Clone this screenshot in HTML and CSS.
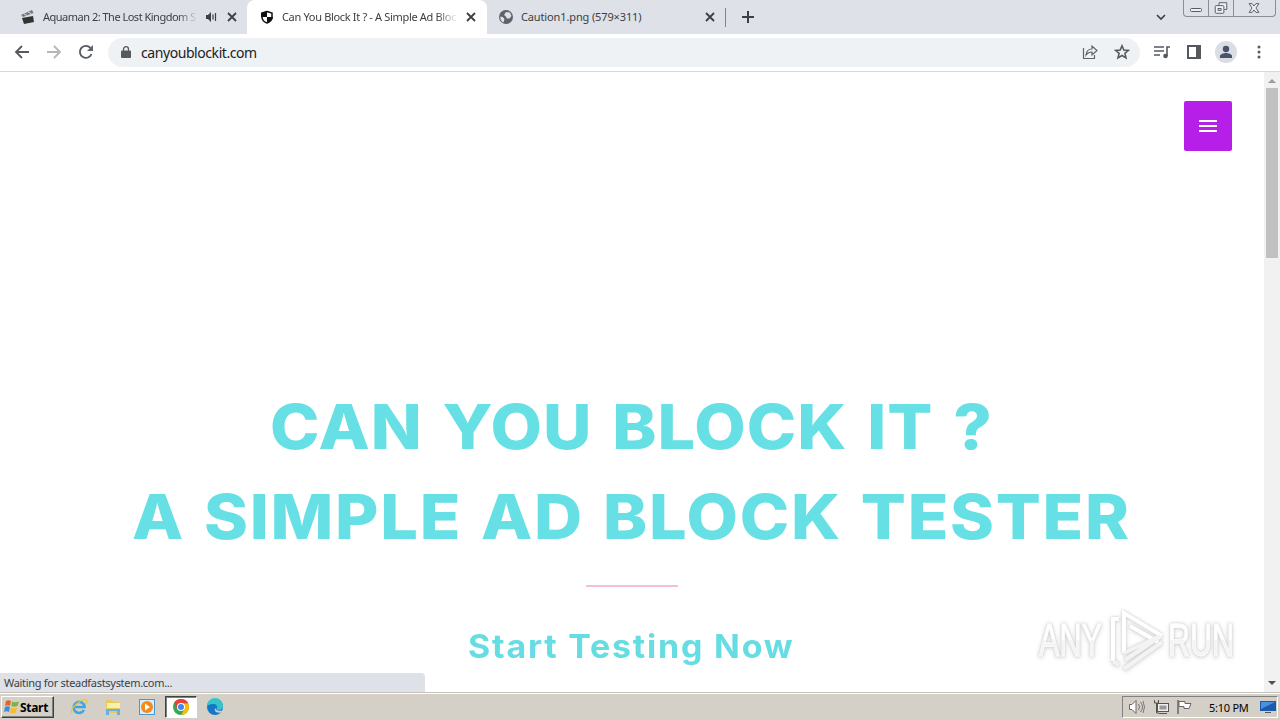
FILE: index.html
```html
<!DOCTYPE html>
<html lang="en">
<head>
  <meta charset="UTF-8">
  <title>Can You Block It ? - A Simple Ad Block Tester</title>
  <link rel="stylesheet" href="styles.css">
</head>
<body>

  <div class="tabs">
    <div class="tab tab-first">
      <svg class="favicon" width="16" height="16" viewBox="0 0 16 16"><path d="M1 6 12 1l1.500 3L3 8z" fill="#777"/><path d="m2 9 11-2 1 6-10 2z" fill="#333"/><path d="m4 5 3 1.500M8 3l3 1.500" stroke="#ddd"/></svg>
      <span class="tab-title title-movie">Aquaman 2: The Lost Kingdom S</span>
      <svg class="sound" width="12" height="12" viewBox="0 0 12 12"><path d="M1 4h2l3-3v10L3 8H1z" fill="#3c4043"/><path d="M8 3.500v5M10.500 2v8" stroke="#3c4043" stroke-width="1.200"/></svg>
      <svg class="close" width="10" height="10" viewBox="0 0 10 10"><path d="m1 1 8 8m0-8-8 8"/></svg>
    </div>
    <div class="tab tab-active">
      <svg class="favicon" width="16" height="16" viewBox="0 0 16 16"><path d="M8 2.500 13 4v4c0 3-2 5-5 6-3-1-5-3-5-6V4z" fill="#fff" stroke="#111" stroke-width="1.500"/><path d="M8 2v6H2V4zM8 8h6c0 3-3 5-6 6z" fill="#111"/></svg>
      <span class="tab-title title-block">Can You Block It ? - A Simple Ad Bloc</span>
      <svg class="close" width="10" height="10" viewBox="0 0 10 10"><path d="m1 1 8 8m0-8-8 8"/></svg>
    </div>
    <div class="tab tab-last">
      <svg class="favicon" width="16" height="16" viewBox="0 0 16 16"><circle cx="8" cy="8" r="7" fill="#5f6368"/><path d="M2.500 7.500c2 0 3 1 4 2.500l-1 3.500C3 12.500 2 10 2.500 7.500zM8 3l4 .5 1.500 3.500-2 2.500H9L7.500 7 6 6z" fill="#dee1e8"/></svg>
      <span class="tab-title title-png">Caution1.png (579×311)</span>
      <svg class="close" width="10" height="10" viewBox="0 0 10 10"><path d="m1 1 8 8m0-8-8 8"/></svg>
    </div>
    <svg class="new-tab" width="12" height="12" viewBox="0 0 12 12"><path d="M6 0v12M0 6h12"/></svg>
    <svg class="tab-search" width="10" height="7" viewBox="0 0 10 7"><path d="m1 1 4 4 4-4"/></svg>
    <div class="window-buttons">
      <svg width="24" height="16" viewBox="0 0 24 16"><rect x="6.500" y="8.500" width="11" height="3" rx="1"/></svg>
      <svg width="25" height="16" viewBox="0 0 25 16"><path d="M10.500 5V2.500h8v7H16"/><rect x="6.500" y="5.500" width="9" height="8" rx="1"/><rect x="9.500" y="8.500" width="3" height="2"/></svg>
      <svg width="41" height="16" viewBox="0 0 41 16"><path d="M15.500 3.500h3l2 2.500 2-2.500h3L22.500 8l3 4.500h-3l-2-2.500-2 2.500h-3l3-4.500z"/></svg>
    </div>
  </div>

  <div class="toolbar">
    <svg class="nav" width="16" height="16" viewBox="0 0 16 16"><path d="M15 8H2m6-6L2 8l6 6"/></svg>
    <svg class="nav nav-off" width="16" height="16" viewBox="0 0 16 16"><path d="M1 8h13M8 2l6 6-6 6"/></svg>
    <svg class="nav" width="16" height="16" viewBox="0 0 16 16"><path d="M13.500 10A6 6 0 1 1 12.300 3.800L14 5.500"/><path d="M15 1v6H9z" fill="#5f6368" stroke="none"/></svg>
    <div class="address">
      <svg width="10" height="13" viewBox="0 0 10 13"><rect y="4.500" width="10" height="7.500" rx="1" fill="#55595e"/><path d="M2.500 5V3.200a2.500 2.500 0 0 1 5 0V5" fill="none" stroke="#55595e" stroke-width="1.300"/></svg>
      <span class="url">canyoublockit.com</span>
      <svg class="share" width="16" height="16" viewBox="0 0 16 16"><path d="M1.500 4v10.500h11V11M4 11c.5-4 2.500-6 6-6V2l5 4.500L10 11V8c-3 0-4.500 1-6 3z"/></svg>
      <svg class="star" width="16" height="16" viewBox="0 0 16 16"><path d="m8 1.800 1.800 4.200 4.600.4-3.500 3 1.100 4.500L8 11.500l-4 2.400 1.100-4.500-3.500-3 4.600-.4z"/></svg>
    </div>
    <svg class="media" width="16" height="14" viewBox="0 0 16 14"><path d="M0 2h10M0 6h10M0 10h6M13 11V2h3" fill="none" stroke="#55595e" stroke-width="1.600"/><circle cx="11.500" cy="11" r="2.300" fill="#55595e"/></svg>
    <svg class="panel" width="14" height="14" viewBox="0 0 14 14"><path d="M0 0h14v14H0zm2 2v10h7V2z" fill="#55595e" fill-rule="evenodd"/></svg>
    <svg class="avatar" width="22" height="22" viewBox="0 0 22 22"><circle cx="11" cy="11" r="11" fill="#dadde1"/><circle cx="11" cy="8" r="3.200" fill="#47536b"/><path d="M5 17v-2c0-2 4-3 6-3s6 1 6 3v2z" fill="#47536b"/></svg>
    <svg class="more" width="4" height="14" viewBox="0 0 4 14"><g fill="#55595e"><circle cx="2" cy="2" r="1.500"/><circle cx="2" cy="7" r="1.500"/><circle cx="2" cy="12" r="1.500"/></g></svg>
  </div>

  <div class="view">
    <div class="page">
      <button class="menu-button"><i></i><i></i><i></i></button>
      <h1>
        <span class="line line-one">CAN YOU BLOCK IT ?</span>
        <span class="line line-two">A SIMPLE AD BLOCK TESTER</span>
      </h1>
      <div class="separator"></div>
      <h2>Start Testing Now</h2>
      <div class="status">Waiting for steadfastsystem.com...</div>
      <div class="watermark">
        <span>ANY</span>
        <svg width="60" height="66" viewBox="0 0 60 66">
          <path d="M19 46V6l38 23M25 19l28 16M8 54V12h6"/>
          <path class="shade" d="m19 46 36-17M20 53l36-24M19 62l38-27M8 54l6 4"/>
        </svg>
        <span>RUN</span>
      </div>
    </div>
    <div class="scrollbar">
      <svg width="8" height="4" viewBox="0 0 8 4"><path d="M0 4 4 0l4 4z" fill="#9a9a9a"/></svg>
      <div class="thumb"></div>
      <svg class="down" width="8" height="4" viewBox="0 0 8 4"><path d="m0 0 4 4 4-4z" fill="#505050"/></svg>
    </div>
  </div>

  <div class="taskbar">
    <button class="start">
      <svg width="17" height="16" viewBox="0 0 17 16"><path d="M3 2c2-1 3-1 5 0L7 7C5 6 4 6 2 7z" fill="#e8622c"/><path d="M9 2.500c2 1 4 1 7 0L14.500 7c-2 1-4 1-6 0z" fill="#7db343"/><path d="M2 8c2-1 3-1 5 0l-1 5c-2-1-3-1-5 0z" fill="#3f8bd4"/><path d="M8 8.500c2 1 4 1 6 0l-1 5c-2 1-4 1-6 0z" fill="#f5bd2c"/></svg>
      Start
    </button>
    <div class="launch">
      <svg width="18" height="18" viewBox="0 0 18 18"><path d="M14 12a5.500 5.500 0 1 1 .6-3H5" fill="none" stroke="#42a5df" stroke-width="2.600"/><path d="M2 15C-1 11 12 0 16 2c1 .5 1 2 0 4" fill="none" stroke="#ecc23c" stroke-width="1.300"/></svg>
    </div>
    <div class="launch">
      <svg width="18" height="18" viewBox="0 0 18 18"><path d="M2 2h6l1 2h6v11H2z" fill="#e8c861"/><path d="M3 5h13v5H3z" fill="#fbf0a8"/><path d="M2 17v-6h14v6h-3v-4H5v4z" fill="#69b2dc"/></svg>
    </div>
    <div class="launch">
      <svg width="18" height="18" viewBox="0 0 18 18"><rect x="1.500" y="1.500" width="15" height="15" fill="#d9edfa" stroke="#5297cc"/><circle cx="9" cy="9" r="6" fill="#f28a1d"/><path d="m7 5.500 5 3.500-5 3.500z" fill="#fff"/></svg>
    </div>
    <div class="launch launch-open">
      <svg width="16" height="16" viewBox="0 0 16 16"><circle cx="8" cy="8" r="8" fill="#34a853"/><path d="M1 4a8 8 0 0 1 14 0H8L4.500 10z" fill="#ea4335"/><path d="M8 4.500h7.200A8 8 0 0 1 8 16l3.500-6z" fill="#fbbc05"/><circle cx="8" cy="8" r="4" fill="#fff"/><circle cx="8" cy="8" r="3" fill="#4285f4"/></svg>
    </div>
    <div class="launch">
      <svg width="18" height="18" viewBox="0 0 18 18"><circle cx="9" cy="9" r="8" fill="#1477c9"/><path d="M1 8a8 8 0 0 1 16 0c0 3-2 4-5 4-2 0-2-1-1-2 1-2-1-4-4-4-3 0-5 1-6 2z" fill="#35c4c8"/><path d="M10 9.500c-1.500 2.500 2 4 6.500 3L15 14.500c-5 1-8-2-5-5z" fill="#d4d0c8"/></svg>
    </div>
    <div class="tray">
      <svg width="18" height="16" viewBox="0 0 18 16"><path d="M1.500 5.500H4l4-4v13l-4-4H1.500z" fill="#fff" stroke="#666"/><path d="M10.500 5q2 3 0 6M12.500 3q4 5 0 10M15 2q3 6 0 12" fill="none" stroke="#777"/></svg>
      <svg width="18" height="16" viewBox="0 0 18 16"><rect x="5.500" y="4.500" width="11" height="8" fill="#eee" stroke="#555"/><path d="M7.500 6.500h7v4h-7z" fill="#999"/><path d="M7 14.500h8M2.500 1v3h4V1M4.500 4v10H7" fill="none" stroke="#555"/></svg>
      <svg width="17" height="16" viewBox="0 0 17 16"><path d="M2 1v14" stroke="#666" stroke-width="1.500"/><path d="M3 2.500h6v2h6l-2 5H8v-2H3z" fill="#fff" stroke="#666"/></svg>
      <span class="clock">5:10 PM</span>
      <svg width="16" height="14" viewBox="0 0 16 14"><path d="M0 1h16v10H0z" fill="#1c59b0"/><path d="M1 2h14L1 9z" fill="#4b91dc"/><path d="M5 12h6v1H5z" fill="#555"/></svg>
    </div>
  </div>

</body>
</html>
```
FILE: styles.css
```css
* {
  box-sizing: border-box;
}

body {
  margin: 0;
  width: 1280px;
  height: 720px;
  overflow: hidden;
  display: flex;
  flex-direction: column;
  background: #fff;
  font-family: "Noto Sans", sans-serif;
  font-size: 11px;
  color: #3c4043;
}

svg {
  display: block;
  flex: none;
}

.tabs {
  height: 34px;
  flex: none;
  display: flex;
  background: #dee1e8;
}

.tab {
  height: 34px;
  display: flex;
  align-items: center;
  flex: none;
}

.tab-first {
  width: 247px;
  padding-left: 20px;
}

.tab-active {
  width: 240px;
  padding-left: 12px;
  background: #fff;
  border-radius: 8px 8px 0 0;
}

.tab-last {
  width: 239px;
  padding-left: 11px;
  position: relative;
}

.tab-last::after {
  content: "";
  position: absolute;
  right: 0;
  top: 8px;
  width: 1px;
  height: 19px;
  background: #80858c;
}

.tab-title {
  margin-left: 7px;
  white-space: nowrap;
  line-height: 18px;
}

.title-movie {
  width: 155px;
  letter-spacing: -0.5px;
  -webkit-mask-image: linear-gradient(90deg, #000 135px, transparent);
}

.title-block {
  width: 176px;
  letter-spacing: -0.33px;
  -webkit-mask-image: linear-gradient(90deg, #000 155px, transparent);
}

.title-png {
  width: 184px;
  letter-spacing: -0.13px;
}

.sound {
  margin-left: 7px;
}

.close {
  margin-left: 8px;
  fill: none;
  stroke: #3c4043;
  stroke-width: 1.8;
}

.tab-first .close {
  margin-left: 10px;
}

.tab-last .close {
  margin-left: 0;
}

.new-tab {
  margin: 11px 0 0 16px;
  stroke: #3c4043;
  stroke-width: 2;
}

.tab-search {
  margin: 14px 17px 0 auto;
  fill: none;
  stroke: #3c4043;
  stroke-width: 1.6;
}

.window-buttons {
  display: flex;
  width: 93px;
  height: 17px;
  margin-right: 4px;
  border: 1px solid #8a8e96;
  border-top: 0;
  border-radius: 0 0 4px 4px;
}

.window-buttons svg {
  fill: #eef0f4;
  stroke: #555b66;
}

.window-buttons svg + svg {
  border-left: 1px solid #8a8e96;
}

.toolbar {
  height: 38px;
  flex: none;
  display: flex;
  align-items: center;
  padding: 0 0 1px 14px;
  border-bottom: 1px solid #d6d8db;
}

.nav {
  margin-right: 16px;
  fill: none;
  stroke: #55595e;
  stroke-width: 1.8;
}

.nav-off {
  stroke: #b4b6b9;
}

.address {
  width: 1032px;
  height: 29px;
  margin: 1px 0 0 -2px;
  padding: 0 10px 1px 13px;
  display: flex;
  align-items: center;
  border-radius: 15px;
  background: #eff2f5;
}

.url {
  margin-left: 10px;
  color: #202124;
  font-size: 14px;
  letter-spacing: -0.43px;
}

.share {
  margin-left: auto;
  fill: none;
  stroke: #5f6368;
  stroke-width: 1.2;
}

.star {
  margin-left: 16px;
  fill: none;
  stroke: #55595e;
  stroke-width: 1.6;
}

.media {
  margin-left: 14px;
}

.panel {
  margin-left: 17px;
}

.avatar {
  margin-left: 14px;
}

.more {
  margin-left: 20px;
}

.view {
  height: 620px;
  flex: none;
  display: flex;
}

.page {
  position: relative;
  width: 1264px;
  padding-top: 29px;
}

.menu-button {
  width: 48px;
  height: 50px;
  margin: 0 32px 0 auto;
  padding: 0;
  display: flex;
  flex-direction: column;
  align-items: center;
  justify-content: center;
  gap: 3px;
  border: 0;
  border-radius: 2px;
  background: #b51fe8;
}

.menu-button i {
  width: 18px;
  height: 2px;
  background: #fff;
}

h1 {
  margin: 231px 0 0;
  color: #66e0e5;
  font: 800 62px/90px Inter, sans-serif;
}

.line {
  display: block;
  width: max-content;
  white-space: nowrap;
  transform: scaleX(1.075);
  transform-origin: left;
}

.line-one {
  margin-left: 270px;
  letter-spacing: 0.9px;
  word-spacing: 4px;
}

.line-two {
  margin-left: 132px;
  letter-spacing: 1.6px;
  word-spacing: 2.5px;
}

.separator {
  width: 92px;
  height: 2px;
  margin: 23px 0 0 586px;
  background: #f4bedb;
}

h2 {
  width: max-content;
  margin: 36px 0 0 468px;
  color: #66dce3;
  font: 700 32px/48px Inter, sans-serif;
  letter-spacing: 1.7px;
  white-space: nowrap;
  transform: scaleX(1.06);
  transform-origin: left;
}

.status {
  position: absolute;
  left: 0;
  bottom: 0;
  width: 425px;
  height: 19px;
  padding-left: 4px;
  border-radius: 0 4px 0 0;
  background: #dee1e8;
  line-height: 20px;
  letter-spacing: -0.3px;
}

.watermark {
  position: absolute;
  left: 1039px;
  top: 535px;
  display: flex;
  align-items: center;
  filter: drop-shadow(0 0 1px #ccc) drop-shadow(0 1px 2px #ddd);
}

.watermark span {
  width: 168px;
  margin-right: -104px;
  background: linear-gradient(#fff 50%, #f4f4f4 50%);
  -webkit-background-clip: text;
  color: transparent;
  font: 47px/60px "Liberation Sans", sans-serif;
  -webkit-text-stroke: 1px #fbfbfb;
  transform: scaleX(0.65);
  transform-origin: left;
  white-space: nowrap;
}

.watermark svg {
  margin: 0 3px 0 2px;
  fill: none;
  stroke: #fff;
  stroke-width: 4;
}

.watermark .shade {
  stroke: #f3f3f3;
}

.scrollbar {
  width: 16px;
  display: flex;
  flex-direction: column;
  align-items: center;
  padding: 7px 0;
  background: #f1f1f1;
}

.thumb {
  width: 12px;
  height: 170px;
  margin-top: 5px;
  background: #c1c1c1;
}

.down {
  margin-top: auto;
}

.taskbar {
  height: 28px;
  flex: none;
  display: flex;
  align-items: center;
  padding: 1px 2px 0 1px;
  border-top: 1px solid #c5c2ba;
  box-shadow: inset 0 1px #fff;
  background: #d4d0c8;
  color: #000;
}

.start {
  display: flex;
  align-items: center;
  width: 53px;
  height: 22px;
  margin-right: 9px;
  padding: 0 0 0 1px;
  border: 1px solid;
  border-color: #fff #404040 #404040 #fff;
  box-shadow: inset -1px -1px #808080;
  background: #d4d0c8;
  color: #000;
  font: bold 12px "Noto Sans", sans-serif;
  letter-spacing: -0.3px;
}

.launch {
  width: 32px;
  height: 22px;
  margin-right: 2px;
  display: flex;
  align-items: center;
  justify-content: center;
}

.launch-open {
  border: 1px solid;
  border-color: #404040 #fff #fff #404040;
  box-shadow: inset 1px 1px #808080;
  background: #fff;
}

.tray {
  display: flex;
  align-items: center;
  width: 156px;
  height: 22px;
  margin-left: auto;
  padding-left: 5px;
  border: 1px solid;
  border-color: #808080 #fff #fff #808080;
}

.tray svg {
  margin-right: 6px;
}

.clock {
  width: 41px;
  margin: 0 10px 0 10px;
  white-space: nowrap;
  letter-spacing: -0.25px;
}

.tray svg:last-child {
  margin-right: 0;
}
```
